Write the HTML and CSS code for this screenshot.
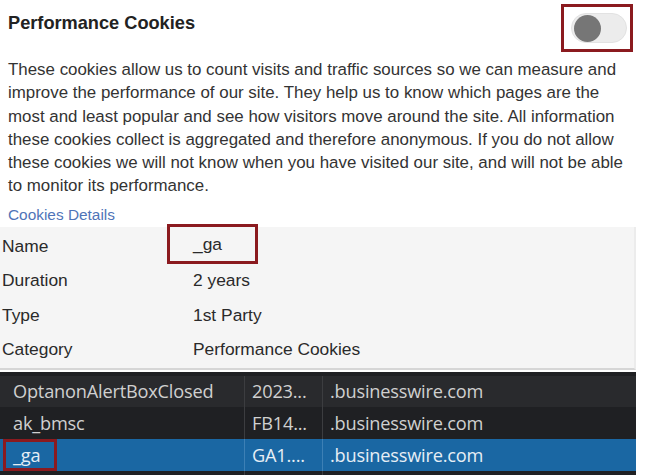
FILE: index.html
```html
<!DOCTYPE html>
<html lang="en">
<head>
<meta charset="utf-8">
<title>Performance Cookies</title>
<link rel="stylesheet" href="styles.css">
</head>
<body>
<div class="panel">
  <header class="head">
    <h3 class="title">Performance Cookies</h3>
    <div class="mark toggle-frame">
      <span class="toggle"><span class="knob"></span></span>
    </div>
  </header>
  <p class="desc">These cookies allow us to count visits and traffic sources so we can measure and improve the performance of our site. They help us to know which pages are the most and least popular and see how visitors move around the site. All information these cookies collect is aggregated and therefore anonymous. If you do not allow these cookies we will not know when you have visited our site, and will not be able to monitor its performance.</p>
  <a class="details-link" href="#">Cookies Details</a>
  <div class="details">
    <div class="row"><span class="label">Name</span><span class="value"><span class="mark name-mark">_ga</span></span></div>
    <div class="row"><span class="label">Duration</span><span class="value">2 years</span></div>
    <div class="row"><span class="label">Type</span><span class="value">1st Party</span></div>
    <div class="row"><span class="label">Category</span><span class="value">Performance Cookies</span></div>
  </div>
  <div class="devtools">
    <div class="dt-row odd"><span class="c1">OptanonAlertBoxClosed</span><span class="c2">2023...</span><span class="c3">.businesswire.com</span></div>
    <div class="dt-row"><span class="c1">ak_bmsc</span><span class="c2">FB14...</span><span class="c3">.businesswire.com</span></div>
    <div class="dt-row sel"><span class="c1"><span class="mark ga-mark">_ga</span></span><span class="c2">GA1....</span><span class="c3">.businesswire.com</span></div>
    <div class="dt-row tail"><span class="c1"></span><span class="c2"></span><span class="c3"></span></div>
  </div>
</div>
</body>
</html>
```
FILE: styles.css
```css
html, body {
  margin: 0;
  padding: 0;
  background: #ffffff;
}
body {
  font-family: "Liberation Sans", Arial, sans-serif;
  color: #333333;
  width: 646px;
  height: 475px;
  overflow: hidden;
}
.panel {
  display: flex;
  flex-direction: column;
}
.head {
  display: flex;
  justify-content: space-between;
  align-items: center;
  padding: 4px 13px 0 8px;
  height: 48px;
}
.title {
  margin: 0;
  font-size: 18.2px;
  font-weight: bold;
  color: #222222;
  align-self: flex-start;
  padding-top: 9px;
}
.mark {
  border: 3px solid #8b1a1f;
  box-sizing: border-box;
}
.toggle-frame {
  width: 72px;
  height: 48px;
  display: flex;
  align-items: center;
  justify-content: center;
  padding-left: 4px;
}
.toggle {
  width: 56px;
  height: 30px;
  border-radius: 15px;
  background: #ececec;
  border: 1px solid #e2e2e2;
  box-sizing: border-box;
  display: flex;
  align-items: center;
  padding-left: 2px;
}
.knob {
  width: 27px;
  height: 27px;
  border-radius: 50%;
  background: #767676;
}
.desc {
  margin: 6px 0 0 0;
  padding: 0 16px 0 8px;
  font-size: 16.9px;
  line-height: 23.3px;
  color: #333333;
}
.details-link {
  margin: 9px 0 0 8px;
  font-size: 15.4px;
  color: #4f74b8;
  text-decoration: none;
  line-height: 16px;
}
.details {
  margin-top: 4px;
  width: 636px;
  background: #f5f5f5;
  border-bottom: 2px solid #d6d6d6;
  border-right: 2px solid #ececec;
  box-sizing: border-box;
  display: flex;
  flex-direction: column;
  padding-top: 2px;
  padding-bottom: 1px;
}
.row {
  display: flex;
  align-items: center;
  height: 34.5px;
  font-size: 17.4px;
  color: #2a2a2a;
}
.label {
  width: 193px;
  padding-left: 2px;
  box-sizing: border-box;
}
.value {
  display: flex;
  align-items: center;
}
.name-mark {
  margin-left: -26px;
  width: 91px;
  height: 40px;
  padding-left: 23px;
  display: flex;
  align-items: center;
  margin-top: -4px;
}
.devtools {
  margin-top: 2px;
  width: 636px;
  background: #1f2023;
  font-family: "Open Sans", "Noto Sans", sans-serif;
  font-size: 18.2px;
  letter-spacing: -0.2px;
  color: #d0d0d0;
  padding-top: 4px;
}
.dt-row {
  display: grid;
  grid-template-columns: 245px 78px 1fr;
  height: 32px;
  align-items: stretch;
}
.dt-row.odd {
  background: #292a2d;
  height: 31px;
}
.dt-row.sel {
  background: #1a67a3;
  color: #e6eef5;
  height: 32px;
}
.dt-row > span {
  display: flex;
  align-items: center;
  border-right: 1px solid #3c3d40;
}
.dt-row.sel > span {
  border-right-color: #3d80b5;
}
.c1 { padding-left: 13px; }
.c2 { padding-left: 7px; }
.c3 { padding-left: 7px; border-right: none !important; }
.ga-mark {
  margin-left: -10px;
  width: 54px;
  height: 32px;
  padding-left: 7px;
  display: flex;
  align-items: center;
}
.dt-row.tail { height: 10px; }
```
